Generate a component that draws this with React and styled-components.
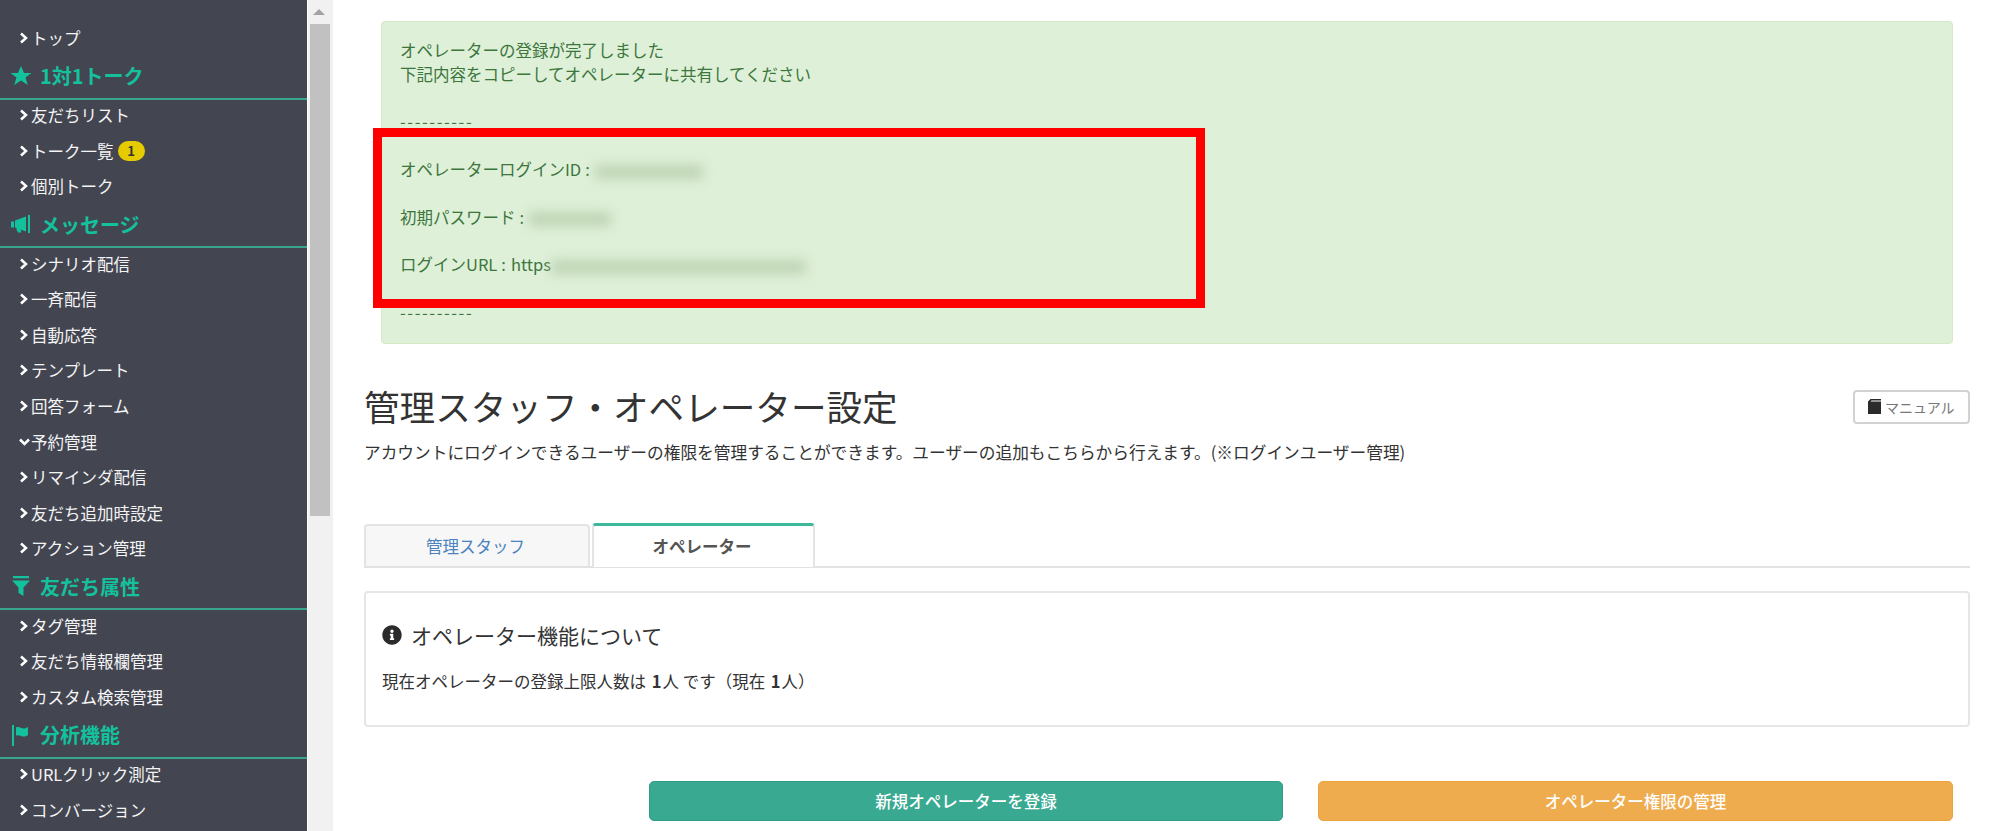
import React from 'react'
import styled, { createGlobalStyle } from 'styled-components'
import { FaInfoCircle } from 'react-icons/fa'

const GlobalStyle = createGlobalStyle`
    html, body {
        margin: 0;
        height: 100%;
        overflow: hidden;
        background: #fff;
    }
    body {
        font-family: "Noto Sans CJK JP", "Noto Sans", sans-serif;
        font-size: 16.5px;
        color: #333;
    }
`

const Page = styled.div`
    display: flex;
    height: 831px;
    overflow: hidden;
`
const Sidebar = styled.nav`
    width: 307px;
    flex: none;
    height: 831px;
    overflow: hidden;
    padding-top: 22.5px;
    box-sizing: border-box;
    background: #434551;
`
const NavRow = styled.div`
    display: flex;
    align-items: center;
    height: 35.6px;
    padding: 0 0 5px 19px;
    box-sizing: border-box;
    color: #f4f4f4;
    font-size: 16.5px;
    white-space: nowrap;
`
const Chevron = styled.svg`
    width: 12px;
    height: 12px;
    flex: none;
    fill: none;
    stroke: #fff;
    stroke-width: 2.5;
`
const Badge = styled.span`
    display: inline-flex;
    align-items: center;
    justify-content: center;
    width: 27px;
    height: 20px;
    margin-left: 4px;
    border-radius: 10px;
    background: #e5cb00;
    color: #333;
    font-size: 13px;
    font-weight: 700;
`
const NavHeading = styled.div`
    display: flex;
    align-items: center;
    height: 41.7px;
    padding: 0 0 4px 10px;
    box-sizing: border-box;
    border-bottom: 2px solid #39a58d;
    color: #14c19d;
    font-size: 20px;
    font-weight: 700;
    white-space: nowrap;
`
const HeadingIcon = styled.svg`
    width: 22px;
    height: 22px;
    flex: none;
    margin-right: 8px;
    fill: #14c19d;
`
const ScrollTrack = styled.div`
    width: 26px;
    flex: none;
    height: 831px;
    background: #f1f1f1;
    border-left: 1px solid #fff;
    box-sizing: border-box;
`
const ScrollArrow = styled.div`
    width: 0;
    height: 0;
    margin: 9px 0 0 5px;
    border-left: 6px solid transparent;
    border-right: 6px solid transparent;
    border-bottom: 6px solid #a3a3a3;
`
const ScrollThumb = styled.div`
    width: 20px;
    height: 492px;
    margin: 9px 0 0 2px;
    background: #c1c1c1;
`
const Main = styled.main`
    flex: 1;
    min-width: 0;
    padding: 21px 30px 0 31px;
`
const Alert = styled.div`
    position: relative;
    margin: 0 17px;
    padding: 17px 18px 18px;
    background: #dff0d8;
    border: 1px solid #d6e9c6;
    border-radius: 4px;
    color: #3c763d;
    font-size: 16.5px;
    line-height: 23.8px;
`
const Dashes = styled.span`
    letter-spacing: 1.6px;
`
const Colon = styled.span`
    margin: 0 5px 0 4px;
`
const Redacted = styled.span`
    display: inline-block;
    height: 14px;
    width: ${p => p.$w}px;
    margin-left: ${p => p.$gap || 0}px;
    vertical-align: middle;
    background: #bdd4b4;
    filter: blur(6px);
`
const Highlight = styled.div`
    position: absolute;
    left: -9px;
    top: 106px;
    width: 832px;
    height: 180px;
    box-sizing: border-box;
    border: 9px solid #ff0000;
`
const TitleRow = styled.div`
    display: flex;
    justify-content: space-between;
    align-items: flex-start;
    margin-top: 40px;
`
const Title = styled.h1`
    margin: 0;
    font-size: 35.6px;
    line-height: 44px;
    font-weight: 400;
    color: #333;
`
const ManualButton = styled.button`
    display: flex;
    align-items: center;
    gap: 3px;
    width: 117px;
    height: 34px;
    margin-top: 6px;
    padding: 0 0 0 12px;
    background: #fff;
    border: 2px solid #d2d2d2;
    border-radius: 4px;
    color: #777;
    font-family: inherit;
    font-size: 14px;
`
const BookIcon = styled.svg`
    width: 15px;
    height: 17px;
    flex: none;
    fill: #2b2b2b;
`
const Lead = styled.p`
    margin: 12px 0 0;
    font-size: 16.7px;
    line-height: 24px;
    color: #333;
`
const Tabs = styled.div`
    display: flex;
    align-items: flex-end;
    gap: 2px;
    height: 44px;
    margin-top: 58px;
    border-bottom: 2px solid #e2e2e2;
`
const Tab = styled.div`
    display: flex;
    align-items: center;
    justify-content: center;
    box-sizing: border-box;
    width: ${p => (p.$active ? '223px' : '226px')};
    height: ${p => (p.$active ? '44px' : '42px')};
    margin-bottom: ${p => (p.$active ? '-1px' : '0')};
    padding-right: 3px;
    background: ${p => (p.$active ? '#fff' : '#f7f7f7')};
    border: 2px solid #e4e4e4;
    border-top: ${p => (p.$active ? '3px solid #3cb99a' : '2px solid #e4e4e4')};
    border-bottom: 0;
    border-radius: 4px 4px 0 0;
    color: ${p => (p.$active ? '#555' : '#4a83bd')};
    font-size: 16.5px;
    font-weight: ${p => (p.$active ? 700 : 400)};
`
const InfoBox = styled.section`
    height: 136px;
    margin-top: 23px;
    padding: 27px 16px 0;
    box-sizing: border-box;
    border: 2px solid #e6e6e6;
    border-radius: 4px;
`
const InfoTitle = styled.h3`
    display: flex;
    align-items: center;
    gap: 9px;
    margin: 0;
    font-size: 21px;
    line-height: 30px;
    font-weight: 400;
    color: #333;
    svg {
        width: 20px;
        height: 20px;
        color: #2b2b2b;
    }
`
const InfoText = styled.p`
    margin: 19px 0 0;
    font-size: 16.5px;
    line-height: 24px;
    color: #333;
    b {
        font-weight: 700;
        margin: 0 1px 0 2px;
    }
`
const ButtonRow = styled.div`
    display: flex;
    justify-content: flex-end;
    gap: 35px;
    margin: 54px 17px 0 0;
`
const ActionButton = styled.button`
    width: ${p => p.$w}px;
    height: 40px;
    background: ${p => p.$color};
    border: 1px solid ${p => p.$edge};
    border-radius: 5px;
    color: #fff;
    font-family: inherit;
    font-size: 16.5px;
    font-weight: 500;
`

const STAR = 'M11 1l3 7h7.5l-6 4.6 2.3 7.4L11 15.5 4.2 20l2.3-7.4-6-4.6H8z'
const BULLHORN = 'M1 8.5h3v6H1zM5 7.5l11-4v15l-11-4zM18 2h2v18h-2zM6 15.5h4l1.5 4h-3.5z'
const FILTER = 'M3 1h16v2.2H3zM2 5.500h18L13.500 12.500V21l-5-3v-5.500z'
const FLAG = 'M2 1h2v21H2zM6 3.500c3-1.500 5 1 7.500 1 1.500 0 3-.5 4.500-1.500v8c-2 1.500-3.500 1.700-5 1.500-2.500-.3-4.500-2-7-.8z'

const Item = ({ label, open, children }) => (
    <NavRow>
        <Chevron viewBox="0 0 12 12">
            {open ? <polyline points="1,3.500 5.500,8 10,3.500" /> : <polyline points="2,1.500 7,6 2,10.500" />}
        </Chevron>
        {label}
        {children}
    </NavRow>
)

const Heading = ({ icon, label }) => (
    <NavHeading>
        <HeadingIcon viewBox="0 0 22 22"><path d={icon} /></HeadingIcon>
        {label}
    </NavHeading>
)

function App() {
    return (
        <Page>
            <GlobalStyle />
            <Sidebar>
                <Item label="トップ" />
                <Heading icon={STAR} label="1対1トーク" />
                <Item label="友だちリスト" />
                <Item label="トーク一覧"><Badge>1</Badge></Item>
                <Item label="個別トーク" />
                <Heading icon={BULLHORN} label="メッセージ" />
                <Item label="シナリオ配信" />
                <Item label="一斉配信" />
                <Item label="自動応答" />
                <Item label="テンプレート" />
                <Item label="回答フォーム" />
                <Item label="予約管理" open />
                <Item label="リマインダ配信" />
                <Item label="友だち追加時設定" />
                <Item label="アクション管理" />
                <Heading icon={FILTER} label="友だち属性" />
                <Item label="タグ管理" />
                <Item label="友だち情報欄管理" />
                <Item label="カスタム検索管理" />
                <Heading icon={FLAG} label="分析機能" />
                <Item label="URLクリック測定" />
                <Item label="コンバージョン" />
            </Sidebar>
            <ScrollTrack>
                <ScrollArrow />
                <ScrollThumb />
            </ScrollTrack>
            <Main>
                <Alert>
                    オペレーターの登録が完了しました<br />
                    下記内容をコピーしてオペレーターに共有してください<br />
                    <br />
                    <Dashes>----------</Dashes><br />
                    <br />
                    オペレーターログインID<Colon>:</Colon><Redacted $w={108} /><br />
                    <br />
                    初期パスワード<Colon>:</Colon><Redacted $w={82} /><br />
                    <br />
                    ログインURL<Colon>:</Colon>https<Redacted $w={255} /><br />
                    <br />
                    <Dashes>----------</Dashes>
                    <Highlight />
                </Alert>
                <TitleRow>
                    <Title>管理スタッフ・オペレーター設定</Title>
                    <ManualButton>
                        <BookIcon viewBox="0 0 15 17">
                            <path d="M1 3.500L3.500 1H14v1.500H4.500L3.500 3.500H14V16H1z" />
                        </BookIcon>
                        マニュアル
                    </ManualButton>
                </TitleRow>
                <Lead>アカウントにログインできるユーザーの権限を管理することができます。ユーザーの追加もこちらから行えます。(※ログインユーザー管理)</Lead>
                <Tabs>
                    <Tab>管理スタッフ</Tab>
                    <Tab $active>オペレーター</Tab>
                </Tabs>
                <InfoBox>
                    <InfoTitle><FaInfoCircle />オペレーター機能について</InfoTitle>
                    <InfoText>現在オペレーターの登録上限人数は <b>1</b>人 です（現在 <b>1</b>人）</InfoText>
                </InfoBox>
                <ButtonRow>
                    <ActionButton $w={634} $color="#3aa992" $edge="#2f9c85">新規オペレーターを登録</ActionButton>
                    <ActionButton $w={635} $color="#efac4e" $edge="#eca33c">オペレーター権限の管理</ActionButton>
                </ButtonRow>
            </Main>
        </Page>
    )
}

export default App
